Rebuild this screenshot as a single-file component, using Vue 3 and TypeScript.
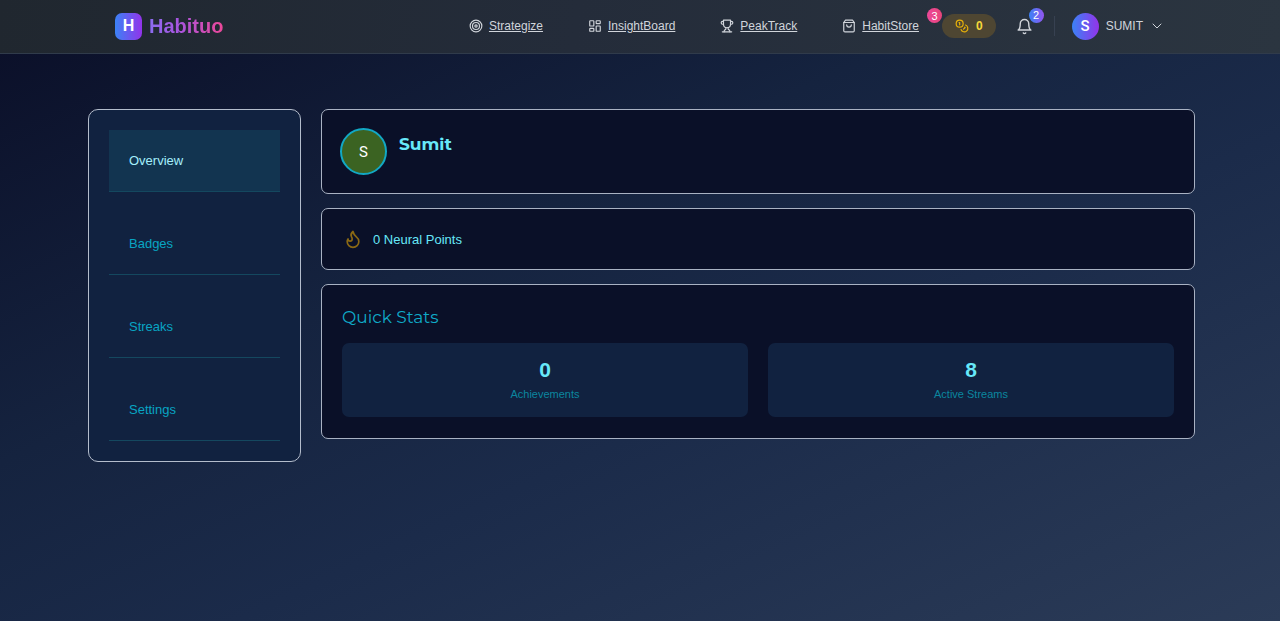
<script setup lang="ts">
import { ref } from 'vue'

interface NavLink {
  label: string
  paths: string[]
  circles?: number[]
}

const links: NavLink[] = [
  { label: 'Strategize', paths: [], circles: [10, 6, 2] },
  {
    label: 'InsightBoard',
    paths: [
      'M4 3h5a1 1 0 0 1 1 1v7a1 1 0 0 1-1 1H4a1 1 0 0 1-1-1V4a1 1 0 0 1 1-1z',
      'M15 3h5a1 1 0 0 1 1 1v3a1 1 0 0 1-1 1h-5a1 1 0 0 1-1-1V4a1 1 0 0 1 1-1z',
      'M15 12h5a1 1 0 0 1 1 1v7a1 1 0 0 1-1 1h-5a1 1 0 0 1-1-1v-7a1 1 0 0 1 1-1z',
      'M4 16h5a1 1 0 0 1 1 1v3a1 1 0 0 1-1 1H4a1 1 0 0 1-1-1v-3a1 1 0 0 1 1-1z',
    ],
  },
  {
    label: 'PeakTrack',
    paths: [
      'M6 9H4.5a2.5 2.5 0 0 1 0-5H6',
      'M18 9h1.5a2.5 2.5 0 0 0 0-5H18',
      'M4 22h16',
      'M10 14.66V17c0 .55-.47.98-.97 1.21C7.85 18.75 7 20.24 7 22',
      'M14 14.66V17c0 .55.47.98.97 1.21C16.15 18.75 17 20.24 17 22',
      'M18 2H6v7a6 6 0 0 0 12 0V2Z',
    ],
  },
  {
    label: 'HabitStore',
    paths: [
      'M6 2 3 6v14a2 2 0 0 0 2 2h14a2 2 0 0 0 2-2V6l-3-4Z',
      'M3 6h18',
      'M16 10a4 4 0 0 1-8 0',
    ],
  },
]

const tabs = ['Overview', 'Badges', 'Streaks', 'Settings']
const activeTab = ref('Overview')

const stats = [
  { value: 0, label: 'Achievements' },
  { value: 8, label: 'Active Streams' },
]
</script>

<template>
  <div class="page">
    <header class="topbar">
      <a class="brand" href="#">
        <span class="brand-mark">H</span>
        <span class="brand-name">Habituo</span>
      </a>
      <div class="actions">
        <nav class="nav">
          <a v-for="link in links" :key="link.label" href="#" class="nav-link">
            <svg class="icon" viewBox="0 0 24 24" aria-hidden="true">
              <circle v-for="r in link.circles" :key="r" cx="12" cy="12" :r="r" />
              <path v-for="d in link.paths" :key="d" :d="d" />
            </svg>
            <span class="nav-text">{{ link.label }}</span>
          </a>
        </nav>
        <button class="coins" type="button" aria-label="Coins">
          <svg class="icon" viewBox="0 0 24 24" aria-hidden="true">
            <circle cx="8" cy="8" r="6" />
            <path d="M18.09 10.37A6 6 0 1 1 10.34 18" />
            <path d="M7 6h1v4" />
            <path d="m16.71 13.88.7.71-2.82 2.82" />
          </svg>
          <span>0</span>
          <span class="badge badge-pink">3</span>
        </button>
        <button class="bell" type="button" aria-label="Notifications">
          <svg class="icon icon-bell" viewBox="0 0 24 24" aria-hidden="true">
            <path d="M6 8a6 6 0 0 1 12 0c0 7 3 9 3 9H3s3-2 3-9" />
            <path d="M10.3 21a1.94 1.94 0 0 0 3.4 0" />
          </svg>
          <span class="badge badge-blue">2</span>
        </button>
        <span class="divider"></span>
        <button class="user" type="button">
          <span class="user-avatar">S</span>
          <span>SUMIT</span>
          <svg class="icon chevron" viewBox="0 0 24 24" aria-hidden="true">
            <path d="m4 8 8 8 8-8" />
          </svg>
        </button>
      </div>
    </header>

    <div class="content">
      <aside class="sidebar">
        <button
          v-for="tab in tabs"
          :key="tab"
          type="button"
          class="tab"
          :class="{ active: tab === activeTab }"
          @click="activeTab = tab"
        >
          {{ tab }}
        </button>
      </aside>

      <main class="main">
        <section class="card profile">
          <span class="avatar">S</span>
          <h1 class="name">Sumit</h1>
        </section>

        <section class="card points">
          <svg class="icon flame" viewBox="0 0 24 24" aria-hidden="true">
            <path
              d="M8.5 14.5A2.5 2.5 0 0 0 11 12c0-1.38-.5-2-1-3-1.072-2.143-.224-4.054 2-6 .5 2.5 2 4.9 4 6.5 2 1.6 3 3.5 3 5.5a7 7 0 1 1-14 0c0-1.153.433-2.294 1-3a2.5 2.5 0 0 0 2.5 2.5z"
            />
          </svg>
          <span>0 Neural Points</span>
        </section>

        <section class="card quick">
          <h2 class="quick-title">Quick Stats</h2>
          <div class="stats">
            <div v-for="stat in stats" :key="stat.label" class="stat">
              <strong class="stat-value">{{ stat.value }}</strong>
              <span class="stat-label">{{ stat.label }}</span>
            </div>
          </div>
        </section>
      </main>
    </div>
  </div>
</template>

<style>
body {
  margin: 0;
  background: #0a0e27;
}
</style>

<style scoped>
.page {
  min-height: 100vh;
  box-sizing: border-box;
  font-family: 'Liberation Sans', Arial, sans-serif;
  background: linear-gradient(155deg, #0a0e27 0%, #15233f 38%, #1b2b4a 60%, #2b3b57 100%);
}

button {
  font: inherit;
  color: inherit;
  border: 0;
  background: none;
  padding: 0;
  cursor: pointer;
}

.icon {
  width: 14px;
  height: 14px;
  flex: none;
  fill: none;
  stroke: currentColor;
  stroke-width: 2;
  stroke-linecap: round;
  stroke-linejoin: round;
}

.topbar {
  display: flex;
  align-items: center;
  justify-content: space-between;
  box-sizing: border-box;
  height: 54px;
  padding: 0 117px 1px 115px;
  color: #d1d5db;
  font-size: 12px;
  background: linear-gradient(100deg, #20272f 0%, #242c3a 45%, #2b3540 100%);
  border-bottom: 1px solid #303b4b;
}

.brand {
  display: flex;
  align-items: center;
  gap: 7px;
  text-decoration: none;
}

.brand-mark,
.user-avatar {
  display: grid;
  place-items: center;
  width: 27px;
  height: 27px;
  color: #fff;
  background: linear-gradient(90deg, #3b82f6, #9333ea);
}

.brand-mark {
  border-radius: 7px;
  font-size: 16px;
  font-weight: 700;
}

.brand-name {
  font-size: 20px;
  font-weight: 700;
  color: transparent;
  background: linear-gradient(90deg, #8b6cf0, #a855e0 40%, #ec4899);
  background-clip: text;
}

.actions {
  display: flex;
  align-items: center;
}

.nav {
  display: flex;
  gap: 45px;
}

.nav-link {
  display: flex;
  align-items: center;
  gap: 6px;
  color: inherit;
  text-decoration: none;
}

.nav-text {
  text-decoration: underline;
}

.coins {
  position: relative;
  display: flex;
  align-items: center;
  gap: 7px;
  height: 24px;
  margin-left: 23px;
  padding: 0 13px;
  border-radius: 12px;
  color: #f5d83a;
  background: #4e4632;
  font-weight: 700;
}

.coins .icon {
  color: #eab308;
}

.bell {
  position: relative;
  display: flex;
  margin-left: 20px;
}

.icon-bell {
  width: 17px;
  height: 17px;
}

.badge {
  position: absolute;
  display: grid;
  place-items: center;
  width: 15px;
  height: 15px;
  border-radius: 50%;
  color: #fff;
  font-size: 11px;
  font-weight: 400;
}

.badge-pink {
  top: -6px;
  left: -15px;
  background: linear-gradient(90deg, #ec4899, #e8457a);
}

.badge-blue {
  top: -10px;
  right: -11px;
  background: linear-gradient(90deg, #3b82f6, #9355f0);
}

.divider {
  width: 1px;
  height: 20px;
  margin: 0 17px 0 21px;
  background: #374151;
}

.user {
  display: flex;
  align-items: center;
  gap: 7px;
}

.user-avatar {
  border-radius: 50%;
  font-family: Roboto, sans-serif;
  font-size: 15px;
  font-weight: 500;
}

.chevron {
  width: 12px;
  height: 12px;
  margin-left: 1px;
}

.content {
  display: flex;
  align-items: flex-start;
  gap: 20px;
  padding: 55px 85px 40px 88px;
}

.sidebar {
  display: flex;
  flex-direction: column;
  gap: 21px;
  box-sizing: border-box;
  width: 213px;
  flex: none;
  padding: 20px;
  border: 1px solid #b4bdcc;
  border-radius: 10px;
  background: #112240;
}

.tab {
  height: 62px;
  padding: 0 20px;
  border-bottom: 1px solid #14485f;
  color: #08a5c3;
  font-size: 13px;
  text-align: left;
}

.tab.active {
  color: #a5effc;
  background: #123450;
}

.main {
  display: flex;
  flex: 1;
  flex-direction: column;
  gap: 14px;
  min-width: 0;
}

.card {
  box-sizing: border-box;
  border: 1px solid #a9b2c3;
  border-radius: 7px;
  background: #0a1028;
}

.profile {
  display: flex;
  align-items: flex-start;
  gap: 12px;
  padding: 18px;
}

.avatar {
  display: grid;
  place-items: center;
  box-sizing: border-box;
  width: 47px;
  height: 47px;
  border: 2px solid #12a8c4;
  border-radius: 50%;
  color: #fff;
  font-family: Roboto, sans-serif;
  font-size: 15px;
  background: #3b6322;
}

.name {
  margin: 5px 0 0;
  color: #67e8f9;
  font-family: Montserrat, Inter, sans-serif;
  font-size: 17px;
  font-weight: 700;
  line-height: 22px;
}

.points {
  display: flex;
  align-items: center;
  gap: 10px;
  min-height: 62px;
  padding: 0 21px;
  color: #67e8f9;
  font-size: 13px;
}

.flame {
  width: 20px;
  height: 20px;
  color: #8b6914;
}

.quick {
  padding: 20px 20px 21px;
}

.quick-title {
  margin: 0 0 14px;
  color: #0fabc8;
  font-family: Montserrat, Inter, sans-serif;
  font-size: 17px;
  font-weight: 400;
  line-height: 24px;
}

.stats {
  display: grid;
  grid-template-columns: 1fr 1fr;
  gap: 20px;
}

.stat {
  display: flex;
  flex-direction: column;
  align-items: center;
  padding: 13px 14px;
  border-radius: 7px;
  background: #112240;
}

.stat-value {
  color: #67e8f9;
  font-size: 21px;
  line-height: 28px;
}

.stat-label {
  color: #0b869f;
  font-size: 11px;
  line-height: 20px;
}
</style>
